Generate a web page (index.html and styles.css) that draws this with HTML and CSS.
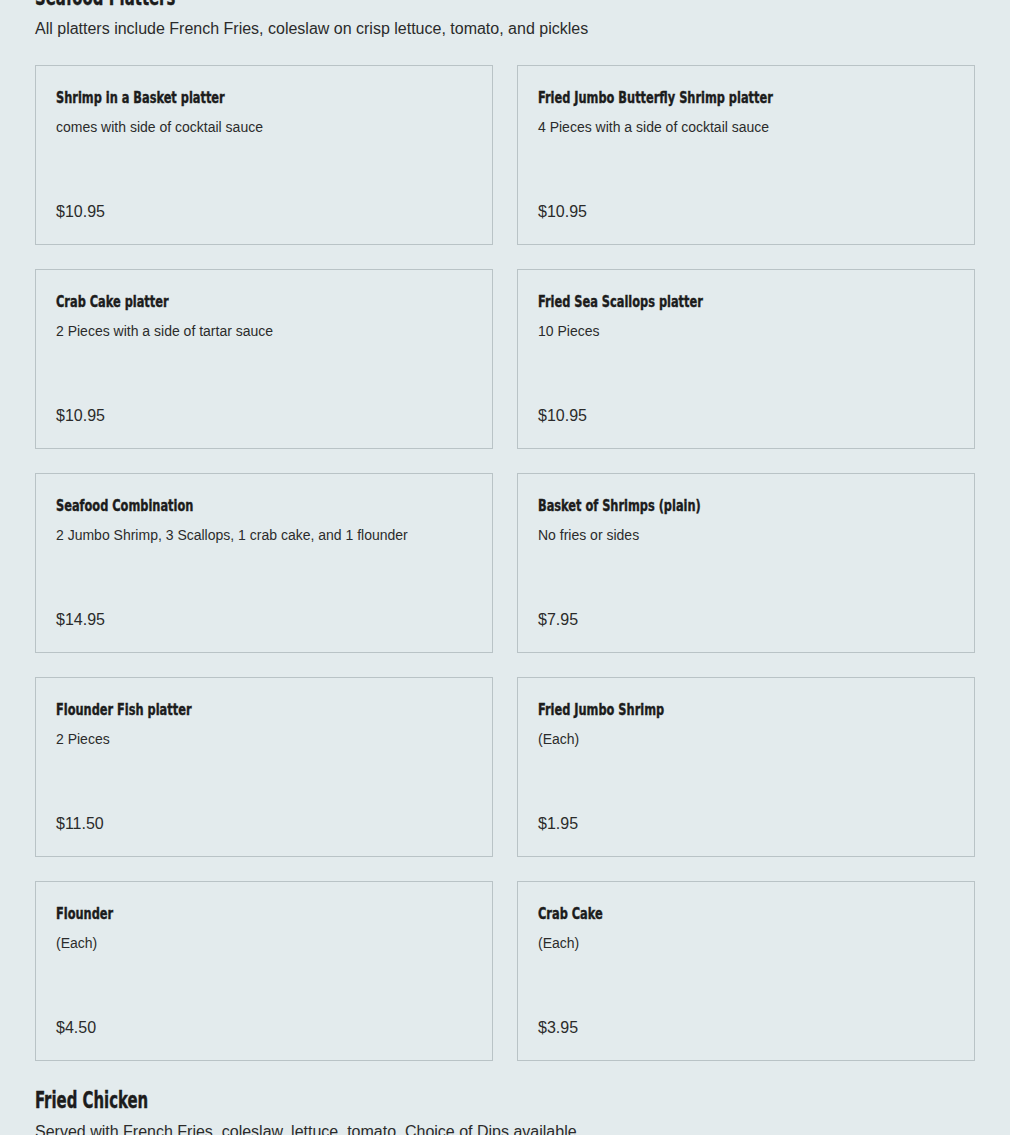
FILE: index.html
```
<!DOCTYPE html>
<html lang="en">
<head>
  <meta charset="UTF-8" />
  <meta name="viewport" content="width=device-width, initial-scale=1.0"/>
  <title>Menu - Seafood Platters</title>
  <link rel="stylesheet" href="styles.css">
</head>
<body>

<main class="menu">

  <section class="menu-section">
    <h2 class="section-title"><span>Seafood Platters</span></h2>
    <p class="section-note">All platters include French Fries, coleslaw on crisp lettuce, tomato, and pickles</p>

    <div class="item-grid">
      <div class="item-card">
        <h3 class="item-name"><span>Shrimp in a Basket platter</span></h3>
        <p class="item-desc">comes with side of cocktail sauce</p>
        <p class="item-price">$10.95</p>
      </div>
      <div class="item-card">
        <h3 class="item-name"><span>Fried Jumbo Butterfly Shrimp platter</span></h3>
        <p class="item-desc">4 Pieces with a side of cocktail sauce</p>
        <p class="item-price">$10.95</p>
      </div>
      <div class="item-card">
        <h3 class="item-name"><span>Crab Cake platter</span></h3>
        <p class="item-desc">2 Pieces with a side of tartar sauce</p>
        <p class="item-price">$10.95</p>
      </div>
      <div class="item-card">
        <h3 class="item-name"><span>Fried Sea Scallops platter</span></h3>
        <p class="item-desc">10 Pieces</p>
        <p class="item-price">$10.95</p>
      </div>
      <div class="item-card">
        <h3 class="item-name"><span>Seafood Combination</span></h3>
        <p class="item-desc">2 Jumbo Shrimp, 3 Scallops, 1 crab cake, and 1 flounder</p>
        <p class="item-price">$14.95</p>
      </div>
      <div class="item-card">
        <h3 class="item-name"><span>Basket of Shrimps (plain)</span></h3>
        <p class="item-desc">No fries or sides</p>
        <p class="item-price">$7.95</p>
      </div>
      <div class="item-card">
        <h3 class="item-name"><span>Flounder Fish platter</span></h3>
        <p class="item-desc">2 Pieces</p>
        <p class="item-price">$11.50</p>
      </div>
      <div class="item-card">
        <h3 class="item-name"><span>Fried Jumbo Shrimp</span></h3>
        <p class="item-desc">(Each)</p>
        <p class="item-price">$1.95</p>
      </div>
      <div class="item-card">
        <h3 class="item-name"><span>Flounder</span></h3>
        <p class="item-desc">(Each)</p>
        <p class="item-price">$4.50</p>
      </div>
      <div class="item-card">
        <h3 class="item-name"><span>Crab Cake</span></h3>
        <p class="item-desc">(Each)</p>
        <p class="item-price">$3.95</p>
      </div>
    </div>
  </section>

  <section class="menu-section">
    <h2 class="section-title"><span>Fried Chicken</span></h2>
    <p class="section-note">Served with French Fries, coleslaw, lettuce, tomato. Choice of Dips available</p>
  </section>

</main>

</body>
</html>
```

FILE: styles.css
```
body {
  font-family: 'Liberation Sans', Arial, sans-serif;
  background: #e3ebed;
  color: #2b2b2b;
  margin: 0;
  padding: 0;
}

.menu {
  width: 940px;
  margin: -16px auto 0;
}

.menu-section {
  margin-bottom: 26px;
}

/* no narrow display font offline, so squeeze a condensed one */
.section-title,
.item-name {
  font-family: 'DejaVu Sans Condensed', 'DejaVu Sans', sans-serif;
  font-weight: 700;
  color: #1c1c1c;
  margin: 0;
  white-space: nowrap;
  -webkit-text-stroke: 0.4px #1c1c1c;
}

.section-title span,
.item-name span {
  display: inline-block;
  transform-origin: left center;
}

.section-title {
  font-size: 23px;
  line-height: 26px;
}

.section-title span {
  transform: scaleX(0.72);
}

.section-note {
  font-size: 16px;
  line-height: 24px;
  margin: 7px 0 24px;
}

.item-grid {
  display: grid;
  grid-template-columns: 1fr 1fr;
  gap: 24px;
}

.item-card {
  display: flex;
  flex-direction: column;
  height: 180px;
  box-sizing: border-box;
  padding: 22px 20px 22px;
  border: 1px solid #b9c3c6;
}

.item-name {
  font-size: 16px;
  line-height: 20px;
}

.item-name span {
  transform: scaleX(0.79);
}

.item-desc {
  font-size: 14px;
  line-height: 20px;
  margin: 9px 0 0;
}

.item-price {
  font-size: 16px;
  line-height: 20px;
  margin: auto 0 0;
}
```
